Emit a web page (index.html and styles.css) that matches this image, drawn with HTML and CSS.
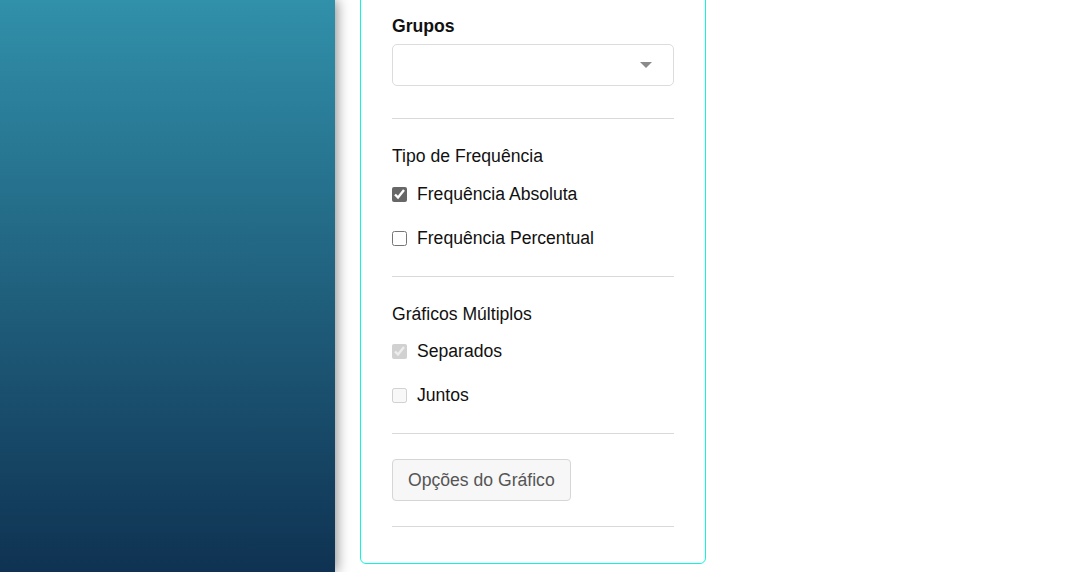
FILE: index.html
```html
<!DOCTYPE html>
<html lang="pt">
<head>
<meta charset="utf-8">
<title>Opções</title>
<link rel="stylesheet" href="styles.css">
</head>
<body>
<div class="layout">
  <aside class="sidebar"></aside>
  <main class="content">
    <section class="panel">
      <div class="field">
        <label class="field-label">Grupos</label>
        <div class="select">
          <span class="select-arrow"></span>
        </div>
      </div>
      <hr class="divider">
      <div class="group">
        <div class="group-title">Tipo de Frequência</div>
        <label class="check"><input type="checkbox" checked> <span>Frequência Absoluta</span></label>
        <label class="check"><input type="checkbox"> <span>Frequência Percentual</span></label>
      </div>
      <hr class="divider">
      <div class="group">
        <div class="group-title compact">Gráficos Múltiplos</div>
        <label class="check"><input type="checkbox" checked disabled> <span>Separados</span></label>
        <label class="check"><input type="checkbox" disabled> <span>Juntos</span></label>
      </div>
      <hr class="divider">
      <div class="actions">
        <button class="btn" type="button">Opções do Gráfico</button>
      </div>
      <hr class="divider last">
    </section>
  </main>
</div>
</body>
</html>
```
FILE: styles.css
```css
* { box-sizing: border-box; }
html, body { margin: 0; padding: 0; height: 100%; overflow: hidden; }
body {
  font-family: "Liberation Sans", Arial, sans-serif;
  color: #111;
  background: #fff;
}
.layout {
  display: flex;
  height: 572px;
}
.sidebar {
  width: 335px;
  flex: none;
  background: linear-gradient(to bottom, #3190aa 0%, #0f3252 100%);
  box-shadow: 2px 0 12px rgba(0, 0, 0, 0.45);
  position: relative;
  z-index: 1;
}
.content {
  flex: 1;
  padding-left: 25px;
}
.panel {
  width: 346px;
  margin-top: -20px;
  border: 1px solid #0ff5dc;
  border-radius: 6px;
  padding: 35px 31px 36px 31px;
}
.field-label {
  display: block;
  font-weight: bold;
  font-size: 17.6px;
  line-height: 20px;
  margin-bottom: 8px;
}
.select {
  height: 42px;
  border: 1px solid #dcdcdc;
  border-radius: 5px;
  background: #fff;
  display: flex;
  align-items: center;
  justify-content: flex-end;
  padding-right: 21px;
}
.select-arrow {
  width: 0;
  height: 0;
  border-left: 6px solid transparent;
  border-right: 6px solid transparent;
  border-top: 6px solid #8a8a8a;
}
.divider {
  border: 0;
  border-top: 1px solid #d9d9d9;
  margin: 32px 0 0 0;
  height: 0;
}
.group {
  padding-top: 27px;
  display: flex;
  flex-direction: column;
}
.group-title {
  font-size: 17.6px;
  line-height: 20px;
  margin-bottom: 18px;
}
.group-title.compact { margin-bottom: 17px; }
.check {
  display: flex;
  align-items: center;
  font-size: 17.6px;
  line-height: 20px;
  height: 20px;
  margin-bottom: 24px;
}
.check:last-child { margin-bottom: 0; }
.check input {
  margin: 0 10px 0 0;
  width: 15px;
  height: 15px;
  accent-color: #676767;
}
.group + .divider { margin-top: 28px; }
.actions { padding-top: 25px; }
.btn {
  font-family: "Liberation Sans", Arial, sans-serif;
  font-size: 17.6px;
  color: #555;
  background: #f7f7f7;
  border: 1px solid #d6d6d6;
  border-radius: 4px;
  height: 42px;
  padding: 0 15px;
}
.actions + .divider { margin-top: 25px; }
```
